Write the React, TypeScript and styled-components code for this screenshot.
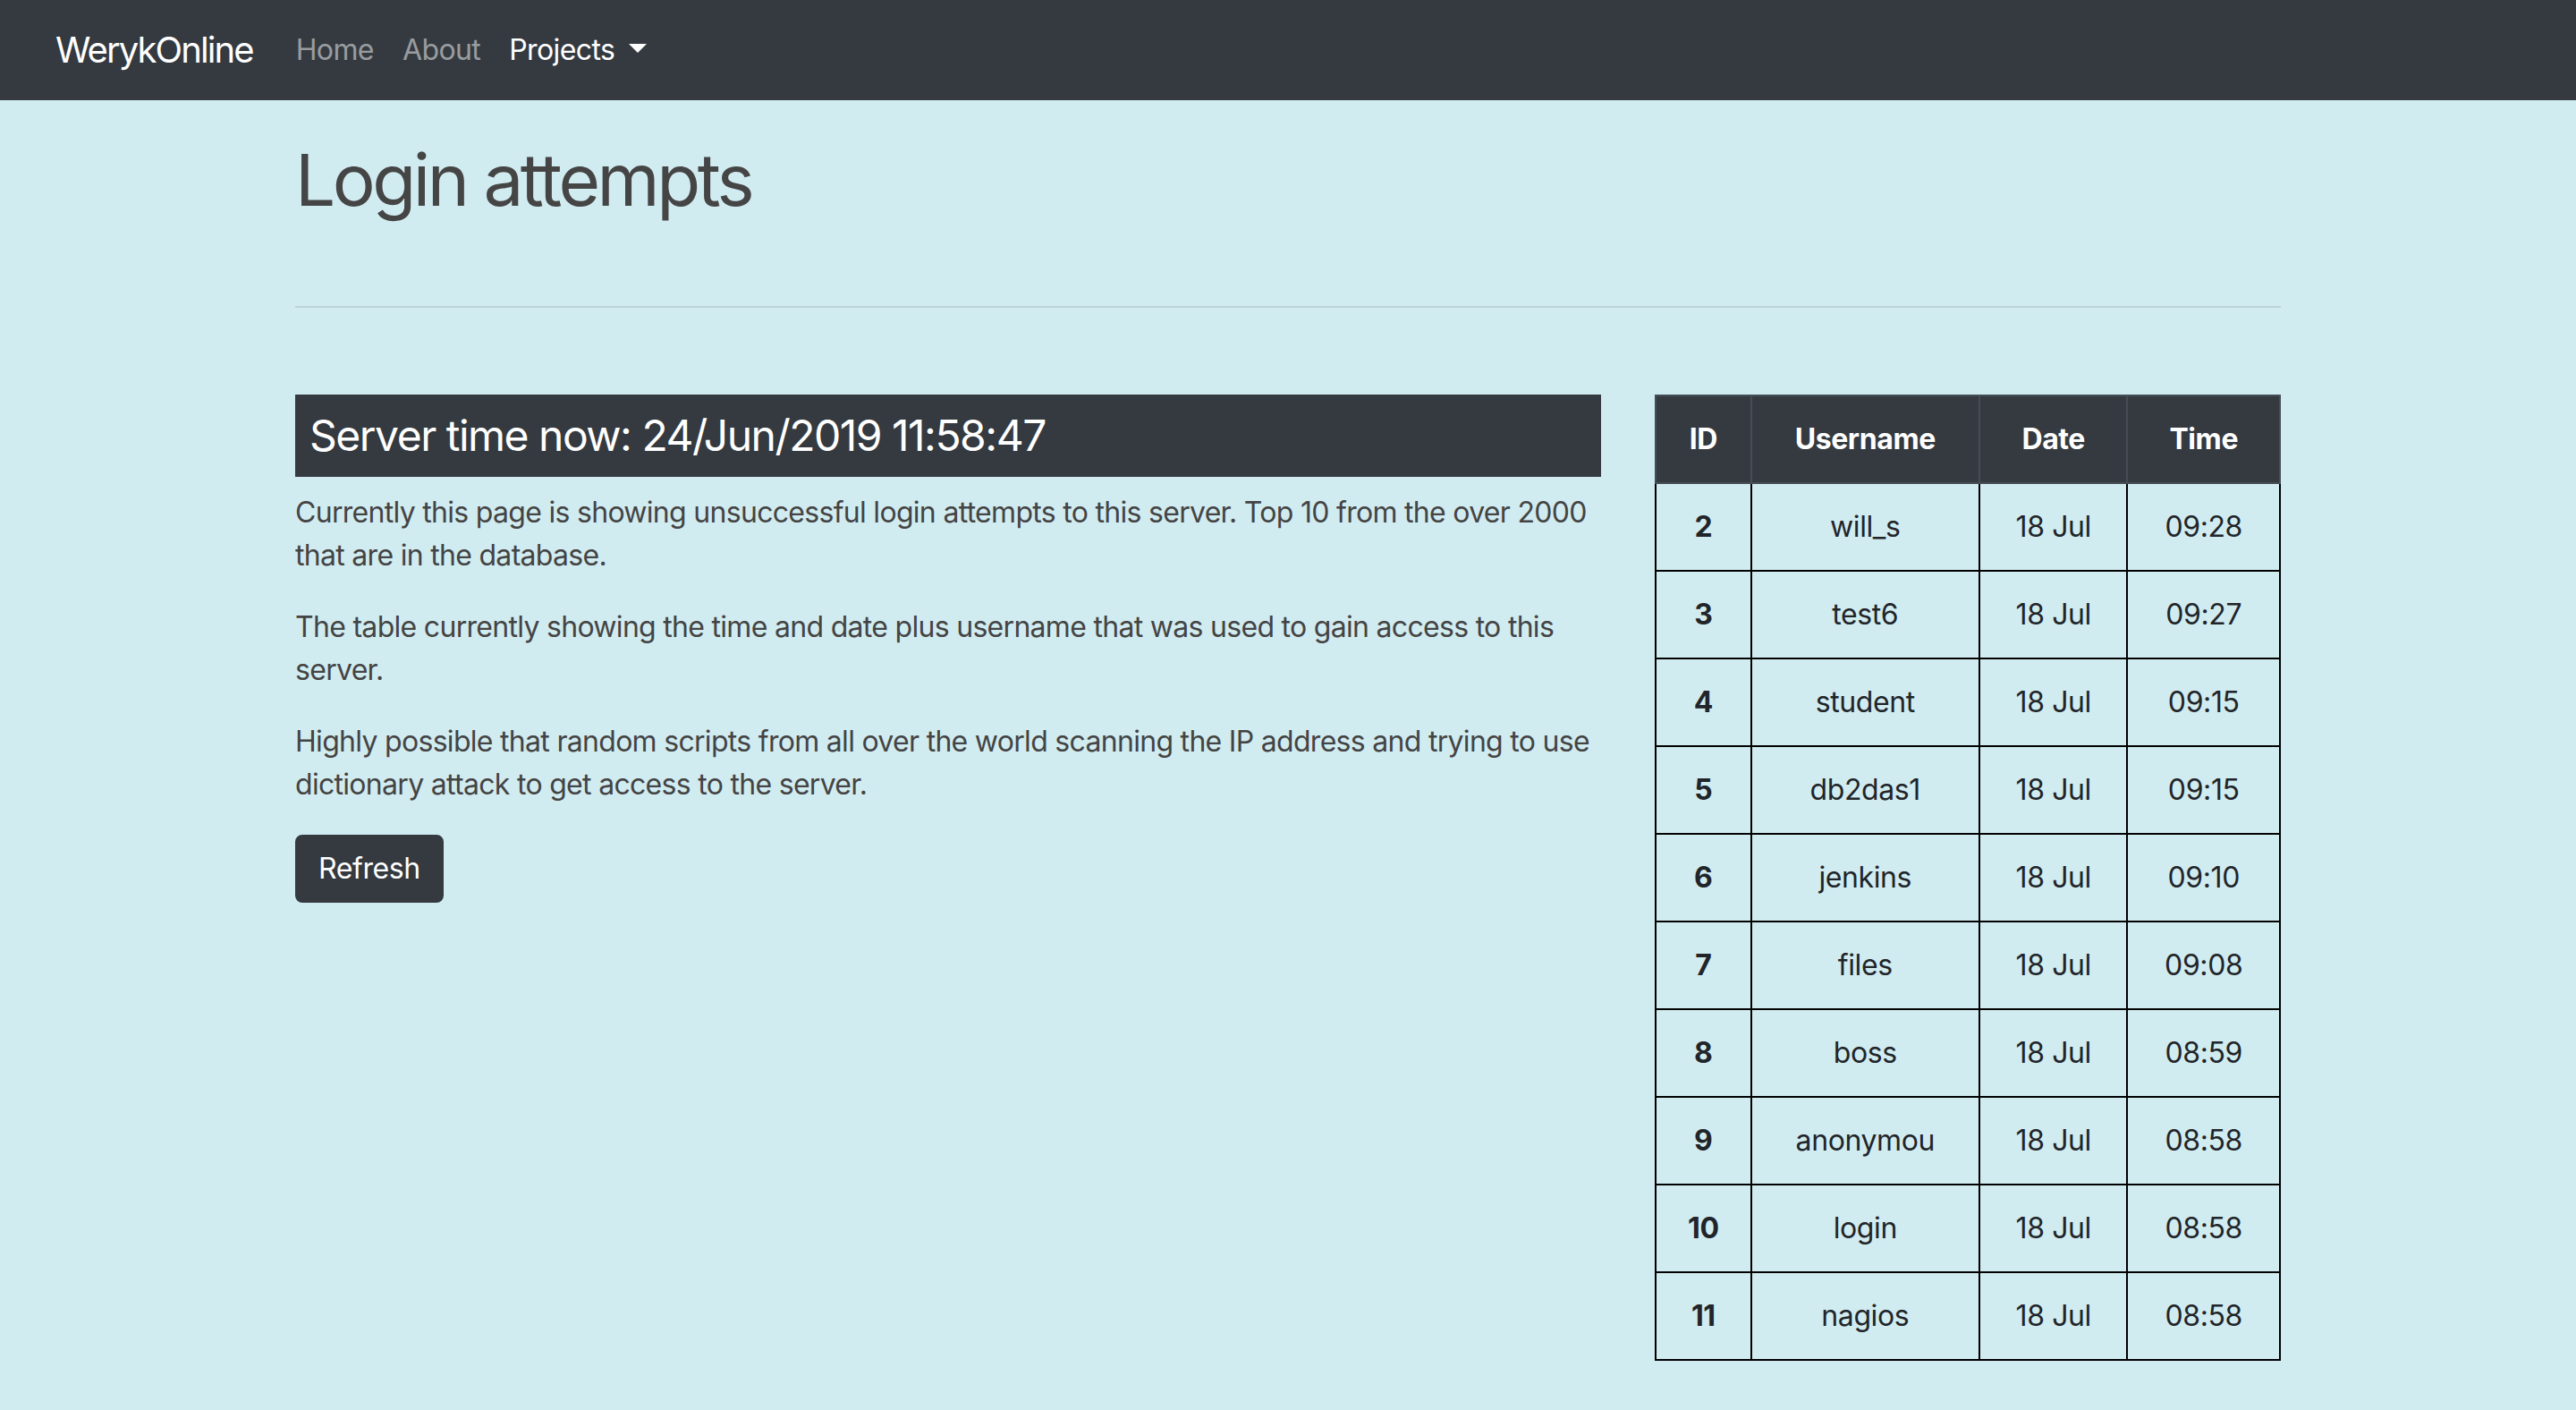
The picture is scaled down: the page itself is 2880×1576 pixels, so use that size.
import React from 'react';
import styled, { createGlobalStyle } from 'styled-components';

const GlobalStyle = createGlobalStyle`
  html, body {
    margin: 0;
    padding: 0;
    background-color: #d1ecf1;
    font-family: Inter, "Noto Sans", sans-serif;
    color: #444;
  }
  * {
    box-sizing: border-box;
  }
`;

const Navbar = styled.nav`
  height: 112px;
  background-color: #343a40;
  display: flex;
  align-items: center;
  padding: 0 62px;
`;

const Brand = styled.a`
  font-size: 40px;
  line-height: 60px;
  color: #fff;
  margin-right: 32px;
  letter-spacing: -1.9px;
  text-decoration: none;
`;

const NavLink = styled.a<{ $active?: boolean }>`
  font-size: 32px;
  line-height: 48px;
  padding: 0 16px;
  color: ${(p) => (p.$active ? '#fff' : 'rgba(255, 255, 255, 0.5)')};
  letter-spacing: -0.6px;
  text-decoration: none;
`;

const DropdownToggle = styled(NavLink)`
  &::after {
    content: '';
    display: inline-block;
    margin-left: 16px;
    vertical-align: 8px;
    border-top: 10px solid #fff;
    border-right: 10px solid transparent;
    border-left: 10px solid transparent;
  }
`;

const Container = styled.main`
  width: 2220px;
  margin: 0 auto;
`;

const Title = styled.h1`
  margin: 41px 0 0;
  font-size: 80px;
  line-height: 96px;
  font-weight: 400;
  color: #454545;
  letter-spacing: -3.5px;
`;

const Divider = styled.hr`
  margin: 93px 0 0;
  border: 0;
  border-top: 2px solid rgba(0, 0, 0, 0.1);
`;

const Row = styled.div`
  display: grid;
  grid-template-columns: 1460px 700px;
  column-gap: 60px;
  margin-top: 97px;
  align-items: start;
`;

const InfoColumn = styled.section`
  display: flex;
  flex-direction: column;
  align-items: flex-start;
`;

const ServerTime = styled.h4`
  align-self: stretch;
  margin: 0 0 16px;
  padding: 17px 16px;
  background-color: #343a40;
  color: #fff;
  font-size: 48px;
  line-height: 58px;
  font-weight: 400;
  letter-spacing: -1.5px;
`;

const Text = styled.p`
  margin: 0 0 32px;
  font-size: 32px;
  line-height: 48px;
  letter-spacing: -0.7px;
`;

const Button = styled.button`
  font-family: inherit;
  font-size: 32px;
  line-height: 48px;
  padding: 12px 24px;
  border: 2px solid #343a40;
  border-radius: 8px;
  background-color: #343a40;
  color: #fff;
  letter-spacing: -0.4px;
  cursor: pointer;
`;

const Table = styled.table`
  width: 100%;
  border-collapse: collapse;
  color: #212529;
  font-size: 32px;
  line-height: 48px;
  letter-spacing: -0.4px;
  text-align: center;
`;

const HeadCell = styled.th<{ $w: number }>`
  width: ${(p) => p.$w}px;
  padding: 24px 0;
  background-color: #343a40;
  color: #fff;
  font-weight: 700;
  border: 2px solid #454d55;
`;

const Cell = styled.td<{ $bold?: boolean }>`
  padding: 24px 0;
  border: 2px solid #000;
  font-weight: ${(p) => (p.$bold ? 700 : 400)};
`;

const attempts = [
  { id: 2, user: 'will_s', date: '18 Jul', time: '09:28' },
  { id: 3, user: 'test6', date: '18 Jul', time: '09:27' },
  { id: 4, user: 'student', date: '18 Jul', time: '09:15' },
  { id: 5, user: 'db2das1', date: '18 Jul', time: '09:15' },
  { id: 6, user: 'jenkins', date: '18 Jul', time: '09:10' },
  { id: 7, user: 'files', date: '18 Jul', time: '09:08' },
  { id: 8, user: 'boss', date: '18 Jul', time: '08:59' },
  { id: 9, user: 'anonymou', date: '18 Jul', time: '08:58' },
  { id: 10, user: 'login', date: '18 Jul', time: '08:58' },
  { id: 11, user: 'nagios', date: '18 Jul', time: '08:58' },
];

const App: React.FC = () => {
  return (
    <>
      <GlobalStyle />
      <Navbar>
        <Brand href="#">WerykOnline</Brand>
        <NavLink href="#">Home</NavLink>
        <NavLink href="#">About</NavLink>
        <DropdownToggle href="#" $active>
          Projects
        </DropdownToggle>
      </Navbar>
      <Container>
        <Title>Login attempts</Title>
        <Divider />
        <Row>
          <InfoColumn>
            <ServerTime>Server time now: 24/Jun/2019 11:58:47</ServerTime>
            <Text>
              Currently this page is showing unsuccessful login attempts to this server. Top 10 from
              the over 2000 that are in the database.
            </Text>
            <Text>
              The table currently showing the time and date plus username that was used to gain
              access to this server.
            </Text>
            <Text>
              Highly possible that random scripts from all over the world scanning the IP address and
              trying to use dictionary attack to get access to the server.
            </Text>
            <Button type="button">Refresh</Button>
          </InfoColumn>
          <Table>
            <thead>
              <tr>
                <HeadCell $w={107}>ID</HeadCell>
                <HeadCell $w={256}>Username</HeadCell>
                <HeadCell $w={166}>Date</HeadCell>
                <HeadCell $w={171}>Time</HeadCell>
              </tr>
            </thead>
            <tbody>
              {attempts.map((a) => (
                <tr key={a.id}>
                  <Cell $bold>{a.id}</Cell>
                  <Cell>{a.user}</Cell>
                  <Cell>{a.date}</Cell>
                  <Cell>{a.time}</Cell>
                </tr>
              ))}
            </tbody>
          </Table>
        </Row>
      </Container>
    </>
  );
};

export default App;
